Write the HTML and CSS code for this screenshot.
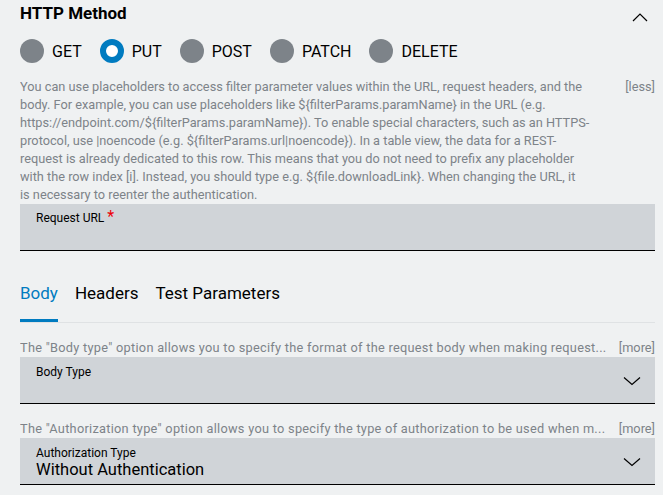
FILE: index.html
```html
<!DOCTYPE html>
<html lang="en">
<head>
    <meta charset="UTF-8">
    <meta name="viewport" content="width=device-width, initial-scale=1.0">
    <title>REST Settings</title>
    <link rel="stylesheet" href="styles.css">
</head>
<body>
    <div class="panel">
        <div class="panel-header">
            <h2 class="panel-title">HTTP Method</h2>
            <svg class="chevron-up" width="16" height="10" viewBox="0 0 16 10">
                <path d="M1 9 L8 2 L15 9" fill="none" stroke="#000" stroke-width="1.2"/>
            </svg>
        </div>

        <div class="radio-group">
            <label class="radio"><span class="radio-dot"></span>GET</label>
            <label class="radio checked"><span class="radio-dot"></span>PUT</label>
            <label class="radio"><span class="radio-dot"></span>POST</label>
            <label class="radio"><span class="radio-dot"></span>PATCH</label>
            <label class="radio"><span class="radio-dot"></span>DELETE</label>
        </div>

        <div class="hint expanded">
            <p class="hint-text">You can use placeholders to access filter parameter values within the URL, request headers, and the body. For example, you can use placeholders like ${filterParams.paramName} in the URL (e.g. https://endpoint.com/${filterParams.paramName}). To enable special characters, such as an HTTPS-protocol, use |noencode (e.g. ${filterParams.url|noencode}). In a table view, the data for a REST-<br>request is already dedicated to this row. This means that you do not need to prefix any placeholder<br>with the row index [i]. Instead, you should type e.g. ${file.downloadLink}. When changing the URL, it<br>is necessary to reenter the authentication.</p>
            <span class="hint-toggle">[less]</span>
        </div>

        <div class="field">
            <span class="field-label">Request URL <span class="required">*</span></span>
        </div>

        <div class="tabs">
            <span class="tab active">Body</span>
            <span class="tab">Headers</span>
            <span class="tab">Test Parameters</span>
        </div>

        <div class="hint">
            <p class="hint-text">The "Body type" option allows you to specify the format of the request body when making request...</p>
            <span class="hint-toggle">[more]</span>
        </div>
        <div class="field select">
            <span class="field-label">Body Type</span>
            <svg class="chevron-down" width="18" height="10" viewBox="0 0 18 10">
                <path d="M1 1.5 L9 8.5 L17 1.5" fill="none" stroke="#000" stroke-width="1.2"/>
            </svg>
        </div>

        <div class="hint hint-spaced">
            <p class="hint-text">The "Authorization type" option allows you to specify the type of authorization to be used when m...</p>
            <span class="hint-toggle">[more]</span>
        </div>
        <div class="field select">
            <span class="field-label">Authorization Type</span>
            <span class="field-value">Without Authentication</span>
            <svg class="chevron-down" width="18" height="10" viewBox="0 0 18 10">
                <path d="M1 1.5 L9 8.5 L17 1.5" fill="none" stroke="#000" stroke-width="1.2"/>
            </svg>
        </div>
    </div>
</body>
</html>
```

FILE: styles.css
```css
* {
    margin: 0;
    padding: 0;
    box-sizing: border-box;
}

body {
    background-color: #eff1f2;
    color: #000;
    font-family: Roboto, "Liberation Sans", sans-serif;
}

.panel {
    padding: 0 8px 10px 20px;
}

.panel-header {
    display: flex;
    justify-content: space-between;
    align-items: flex-start;
    height: 30px;
}

.panel-title {
    font-size: 17px;
    font-weight: 700;
    line-height: 20px;
    padding-top: 3px;
}

.chevron-up {
    margin-top: 12px;
    margin-right: 7px;
}

.radio-group {
    display: flex;
    gap: 18px;
    padding-top: 9px;
    height: 48px;
}

.radio {
    display: flex;
    align-items: center;
    gap: 8px;
    font-size: 16px;
    height: 24px;
}

.radio-dot {
    width: 24px;
    height: 24px;
    border-radius: 50%;
    background-color: #7d8389;
}

.radio.checked .radio-dot {
    background-color: #fff;
    border: 6px solid #007bc0;
}

.hint {
    display: flex;
    align-items: flex-start;
    justify-content: space-between;
    gap: 8px;
    color: #7d8389;
    font-size: 12.75px;
    line-height: 18px;
}

.hint-text {
    white-space: nowrap;
    overflow: hidden;
    letter-spacing: 0.28px;
}

.hint.expanded .hint-text {
    white-space: normal;
    letter-spacing: 0;
    max-width: 592px;
}

.hint-toggle {
    white-space: nowrap;
}

.field {
    position: relative;
    height: 47px;
    background-color: #d0d4d8;
    border-bottom: 1px solid #000;
    padding: 5px 16px 0;
    display: flex;
    flex-direction: column;
    align-items: flex-start;
}

.field-label {
    font-size: 12px;
    line-height: 16px;
}

.required {
    color: #ed0007;
    font-size: 16px;
}

.field-value {
    font-size: 16.5px;
    line-height: 18px;
}

.field.select .field-label {
    padding-top: 2px;
}

.chevron-down {
    position: absolute;
    right: 14px;
    top: 19px;
}

.tabs {
    display: flex;
    gap: 17px;
    margin-top: 30px;
    border-bottom: 1px solid #dfe2e4;
    margin-bottom: 16px;
}

.tab {
    font-size: 17px;
    line-height: 24px;
    padding-bottom: 17px;
}

.tab.active {
    color: #007bc0;
    box-shadow: inset 0 -3px 0 #007bc0;
}

.hint-spaced {
    margin-top: 16px;
}
```
